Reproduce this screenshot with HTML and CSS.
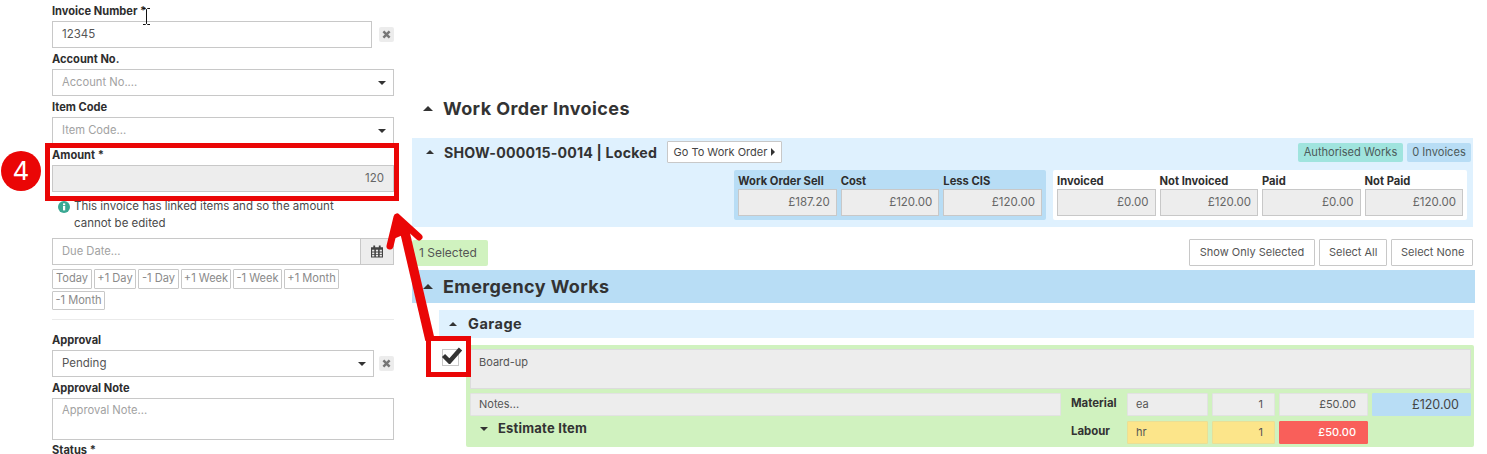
FILE: index.html
```html
<!DOCTYPE html>
<html lang="en">
<head>
<meta charset="utf-8">
<title>Work Order Invoices</title>
<link rel="stylesheet" href="styles.css">
</head>
<body>
<svg class="defs" width="0" height="0" aria-hidden="true">
  <symbol id="i-x" viewBox="0 0 12 12"><path d="M2.6 2.6l6.8 6.8M9.4 2.6L2.6 9.4" stroke="currentColor" stroke-width="2.7" fill="none"/></symbol>
</svg>
<div class="page">
  <aside class="form">
    <label class="lbl">Invoice Number *</label>
    <div class="with-clear">
      <div class="ctl grow val">12345</div>
      <span class="clear"><svg class="x"><use href="#i-x"/></svg></span>
    </div>
    <label class="lbl">Account No.</label>
    <div class="ctl ph select">Account No.... <i class="caret-down"></i></div>
    <label class="lbl">Item Code</label>
    <div class="ctl ph select">Item Code... <i class="caret-down"></i></div>
    <label class="lbl">Amount *</label>
    <div class="ctl disabled right">120</div>
    <div class="info">
      <svg class="info-ico" viewBox="0 0 12 12"><circle cx="6" cy="6" r="6" fill="#3aa893"/><rect x="5" y="5" width="2.2" height="4.4" fill="#fff"/><rect x="5" y="2.4" width="2.2" height="1.8" fill="#fff"/></svg>
      <p>This invoice has linked items and so the amount cannot be edited</p>
    </div>
    <div class="date">
      <div class="ctl ph grow flat">Due Date...</div>
      <span class="addon">
        <svg class="cal" viewBox="0 0 13 13"><path fill="#444" d="M2.5 0h2v2h4V0h2v2H13v11H0V2h2.5z"/><path fill="#ededed" d="M1.2 4.6h2.4v2H1.2zM5.3 4.6h2.4v2H5.3zM9.4 4.6h2.4v2H9.4zM1.2 7.6h2.4v2H1.2zM5.3 7.6h2.4v2H5.3zM9.4 7.6h2.4v2H9.4zM1.2 10.4h2.4v1.6H1.2zM5.3 10.4h2.4v1.6H5.3zM9.4 10.4h2.4v1.6H9.4z"/></svg>
      </span>
    </div>
    <div class="quick">
      <span class="q w40">Today</span><span class="q w42">+1 Day</span><span class="q w41">-1 Day</span><span class="q w50">+1 Week</span><span class="q w49">-1 Week</span><span class="q w55">+1 Month</span><span class="q w53">-1 Month</span>
    </div>
    <hr class="rule">
    <label class="lbl">Approval</label>
    <div class="with-clear tight">
      <div class="ctl grow val select">Pending <i class="caret-down"></i></div>
      <span class="clear"><svg class="x"><use href="#i-x"/></svg></span>
    </div>
    <label class="lbl">Approval Note</label>
    <div class="ctl ph area">Approval Note...</div>
    <label class="lbl last">Status *</label>
  </aside>

  <main class="main">
    <h2 class="h-main"><i class="caret-up big"></i>Work Order Invoices</h2>
    <section class="panel">
      <div class="panel-top">
        <i class="caret-up"></i>
        <h3 class="panel-title">SHOW-000015-0014 | Locked</h3>
        <span class="goto">Go To Work Order <i class="caret-right"></i></span>
        <span class="badges"><span class="badge teal">Authorised Works</span><span class="badge blue">0 Invoices</span></span>
      </div>
      <div class="stats">
        <div class="stat-group g-blue">
          <div class="stat"><b>Work Order Sell</b><span>£187.20</span></div>
          <div class="stat"><b>Cost</b><span>£120.00</span></div>
          <div class="stat"><b>Less CIS</b><span>£120.00</span></div>
        </div>
        <div class="stat-group g-white">
          <div class="stat"><b>Invoiced</b><span>£0.00</span></div>
          <div class="stat"><b>Not Invoiced</b><span>£120.00</span></div>
          <div class="stat"><b>Paid</b><span>£0.00</span></div>
          <div class="stat"><b>Not Paid</b><span>£120.00</span></div>
        </div>
      </div>
    </section>
    <div class="toolbar">
      <span class="selected">1 Selected</span>
      <span class="tools"><span class="tool">Show Only Selected</span><span class="tool">Select All</span><span class="tool">Select None</span></span>
    </div>
    <h2 class="bar-main"><i class="caret-up big"></i>Emergency Works</h2>
    <h3 class="bar-sub"><i class="caret-up"></i>Garage</h3>
    <div class="item-row">
      <span class="check"></span>
      <div class="item">
        <div class="item-desc">Board-up</div>
        <div class="item-grid">
          <div class="f">Notes...</div>
          <b class="kind">Material</b>
          <div class="f">ea</div>
          <div class="f r">1</div>
          <div class="f r">£50.00</div>
          <div class="f r total">£120.00</div>
          <b class="est"><i class="caret-down small"></i>Estimate Item</b>
          <b class="kind">Labour</b>
          <div class="f warn">hr</div>
          <div class="f warn r">1</div>
          <div class="f r danger">£50.00</div>
        </div>
      </div>
    </div>
  </main>
</div>

<div class="callout c-amount"></div>
<div class="callout c-check"></div>
<div class="num">4</div>
<svg class="tick" viewBox="0 0 22 18"><path d="M2.5 9.5l6 6L19.5 3" fill="none" stroke="#333" stroke-width="4.4"/></svg>
<svg class="arrow" viewBox="0 0 1487 454" width="1487" height="454"><path d="M403 224L430 340" fill="none" stroke="#ea0606" stroke-width="9.5"/><path d="M390 246L397 217L419 237" fill="none" stroke="#ea0606" stroke-width="7" stroke-linecap="round" stroke-linejoin="round"/><path d="M397 213L391 240L410 232z" fill="#ea0606"/></svg>
<svg class="ibeam" viewBox="0 0 9 17"><path d="M1 .5h2.5l1 1 1-1H8M4.5 1.5v14M1 16.5h2.5l1-1 1 1H8" fill="none" stroke="#111" stroke-width="1"/></svg>
</body>
</html>
```
FILE: styles.css
```css
* { box-sizing: border-box; }
html, body { margin: 0; height: 454px; overflow: hidden; background: #fff; }
body { font-family: Inter, "Noto Sans", sans-serif; font-size: 11px; color: #3b3b3b; position: relative; }
.defs { position: absolute; }
i { display: inline-block; }
p, h2, h3 { margin: 0; }

.page { display: flex; width: 1487px; height: 454px; overflow: hidden; }
.form { margin-left: 52px; flex: none; width: 342px; }
.main { width: 1063px; margin-left: 18px; flex: none; padding-top: 92px; }

.lbl { display: block; height: 21px; line-height: 23px; font-size: 11.1px; font-weight: 700; color: #2e2e2e; white-space: nowrap; }
.last { height: 9px; margin-top: 6px; line-height: 9px; }
.ctl { height: 27px; border: 1px solid #c8c8c8; line-height: 25px; padding: 0 9px; font-size: 11.5px; background: #fff; }
.val { color: #555; }
.ph { color: #a2a2a2; font-size: 11.2px; }
.grow { flex: 1; }
.select { display: flex; justify-content: space-between; align-items: center; padding-right: 7px; }
.disabled { background: #ededed; color: #666; }
.right { text-align: right; }
.with-clear { display: flex; align-items: center; }
.clear { width: 15px; height: 15px; margin-left: 7px; background: #ececec; border-radius: 2px; display: flex; align-items: center; justify-content: center; color: #777; }
.tight .clear { margin-left: 5px; }
.x { width: 11px; height: 11px; }

.info { display: flex; padding: 6px 0 0 6px; height: 46px; font-size: 11.5px; line-height: 17px; color: #4a4a4a; }
.info p { width: 300px; }
.info-ico { width: 12px; height: 12px; margin: 3px 4px 0 0; flex: none; }

.date { display: flex; }
.flat { border-right: 0; }
.addon { width: 34px; height: 27px; background: #ededed; border: 1px solid #c8c8c8; display: flex; align-items: center; justify-content: center; }
.cal { width: 12px; height: 13px; }

.quick { display: flex; flex-wrap: wrap; gap: 2px 2px; padding-top: 4px; width: 300px; }
.q { height: 19.5px; line-height: 17.5px; border: 1px solid #c8c8c8; border-radius: 1px; font-size: 11.1px; color: #8a8a8a; text-align: center; white-space: nowrap; }
.w40 { width: 40px; } .w41 { width: 41px; } .w42 { width: 42px; } .w49 { width: 49px; } .w50 { width: 50px; } .w53 { width: 53px; } .w55 { width: 55px; }
.rule { border: 0; border-top: 1px solid #eaeaea; margin: 9px 0 9px; }
.area { height: 42px; line-height: 23px; }

.h-main { height: 32px; font-size: 18px; letter-spacing: .4px; font-weight: 700; color: #333; display: flex; align-items: center; padding-left: 11px; }
.bar-main { height: 33px; margin-top: 4px; background: #b8ddf5; font-size: 18px; letter-spacing: .4px; font-weight: 700; color: #333; display: flex; align-items: center; padding-left: 11px; }
.big { margin-right: 10px; border-left-width: 5px !important; border-right-width: 5px !important; border-bottom-width: 5px !important; }
.caret-up { width: 0; height: 0; border-left: 4px solid transparent; border-right: 4px solid transparent; border-bottom: 4px solid #333; }
.caret-down { width: 0; height: 0; border-left: 4px solid transparent; border-right: 4px solid transparent; border-top: 4px solid #333; }
.caret-right { width: 0; height: 0; border-top: 4px solid transparent; border-bottom: 4px solid transparent; border-left: 4px solid #333; margin-left: 1px; }

.panel { margin-top: 14px; width: 1061px; height: 89px; background: #dff1fe; padding: 3px 2px 0 14px; }
.panel-top { display: flex; align-items: center; height: 22px; }
.panel-title { font-size: 14.2px; letter-spacing: .18px; font-weight: 700; color: #333; margin-left: 10px; white-space: nowrap; width: 223px; }
.goto { height: 22px; width: 115px; line-height: 20px; background: #fff; border: 1px solid #c8c8c8; font-size: 11px; color: #444; text-align: center; border-radius: 1px; white-space: nowrap; }
.badges { margin-left: auto; display: flex; gap: 4px; margin-top: 1px; }
.badge { height: 19px; line-height: 19px; border-radius: 2px; font-size: 11.1px; color: #4c5a5a; text-align: center; white-space: nowrap; }
.teal { width: 105px; background: #a0e4de; }
.blue { width: 64px; background: #b8ddf5; }
.stats { display: flex; justify-content: flex-end; gap: 7px; margin-top: 7px; padding-right: 4px; }
.stat-group { display: flex; height: 50px; padding: 0 4px; gap: 4px; border-radius: 2px; }
.g-blue { background: #b8ddf5; width: 312px; }
.g-white { background: #fff; width: 414px; }
.stat { flex: 1; min-width: 0; }
.stat b { display: block; height: 19px; line-height: 23px; font-size: 11.2px; color: #2e2e2e; white-space: nowrap; }
.stat span { display: block; height: 27px; line-height: 25px; background: #ededed; border: 1px solid #c8c8c8; text-align: right; padding-right: 6px; font-size: 11.5px; color: #666; }

.toolbar { display: flex; justify-content: space-between; align-items: flex-end; margin-top: 12px; height: 27px; }
.selected { width: 76px; height: 26px; line-height: 26px; padding-left: 7px; background: #d0f2bf; border-radius: 2px; font-size: 12px; color: #555; white-space: nowrap; }
.tools { display: flex; gap: 4px; margin-right: 2px; }
.tool { height: 27px; line-height: 25px; padding: 0 9px; border: 1px solid #c8c8c8; border-radius: 1px; font-size: 11px; color: #555; white-space: nowrap; background: #fff; text-align: center; }
.tool:nth-child(1) { width: 126px; } .tool:nth-child(2) { width: 68px; } .tool:nth-child(3) { width: 82px; }

.bar-sub { margin: 7px 1px 0 27px; height: 28px; padding-bottom: 1px; background: #dff1fe; font-size: 14.5px; letter-spacing: .5px; font-weight: 700; color: #333; display: flex; align-items: center; padding-left: 10px; }
.bar-sub .caret-up { margin-right: 11px; }

.item-row { display: flex; margin-top: 7px; }
.check { width: 17px; height: 17px; margin: 4px 7px 0 30px; border: 1px solid #c8c8c8; flex: none; }
.item { width: 1008px; height: 102px; background: #d0f2bf; border-radius: 2px; padding: 4px 3px 0 4px; }
.item-desc { height: 40px; background: #ededed; border: 1px solid #dcdcdc; padding: 4px 8px; font-size: 11px; line-height: 17px; color: #555; }
.item-grid { display: grid; grid-template-columns: 591px 58px 81px 63px 89px 99px; column-gap: 4px; row-gap: 4.5px; grid-auto-rows: 23px; margin-top: 4px; }
.f { background: #ededed; border: 1px solid #e2e2e2; border-radius: 1px; line-height: 21px; padding: 0 8px; font-size: 11px; color: #555; }
.r { text-align: right; padding-right: 11px; }
.kind { font-size: 11.4px; line-height: 20px; padding-left: 6px; color: #333; }
.total { background: #b8ddf5; border-color: #b8ddf5; font-size: 12.5px; color: #444; }
.warn { background: #fce58a; border-color: #eadf95; }
.danger { background: #f95f5a; border-color: #f95f5a; color: #fff; font-weight: 500; }
.est { grid-column: 1; font-size: 13px; letter-spacing: .2px; line-height: 14px; color: #333; padding-left: 10px; }
.est .small { margin: 0 10px 2px 0; }

.callout { position: absolute; border: 5px solid #ea0606; }
.c-amount { left: 45px; top: 143px; width: 354px; height: 58px; }
.c-check { left: 426px; top: 336px; width: 45px; height: 41px; }
.num { position: absolute; left: 1px; top: 151px; width: 40px; height: 40px; border-radius: 50%; background: #ea0606; color: #fff; font-size: 26px; line-height: 40px; text-align: center; }
.tick { position: absolute; left: 441px; top: 346px; width: 22px; height: 18px; }
.arrow { position: absolute; left: 0; top: 0; pointer-events: none; }
.ibeam { position: absolute; left: 142px; top: 8px; width: 9px; height: 17px; }
```
